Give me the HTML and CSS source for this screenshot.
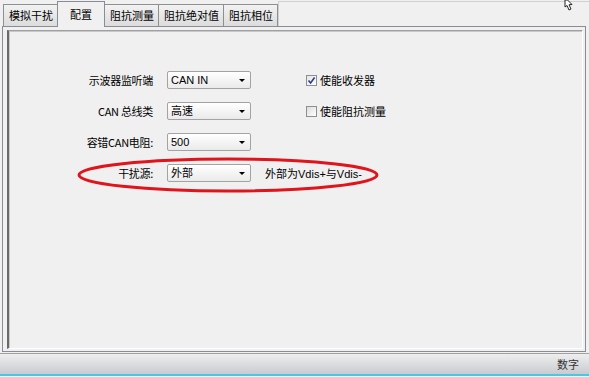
FILE: index.html
```html
<!DOCTYPE html>
<html lang="zh-CN">
  <head>
    <meta charset="UTF-8" />
    <meta name="viewport" content="width=device-width, initial-scale=1.0" />
    <title>配置</title>
    <link rel="stylesheet" href="styles.css">
  </head>
  <body>
    <div class="window">
      <div class="tabstrip">
        <div class="tab">模拟干扰</div>
        <div class="tab active">配置</div>
        <div class="tab">阻抗测量</div>
        <div class="tab">阻抗绝对值</div>
        <div class="tab">阻抗相位</div>
        <div class="strip-rest"></div>
      </div>
      <div class="tabpage">
        <div class="panel">
          <div class="form">
            <span class="label">示波器监听端</span>
            <div class="select">CAN IN<i class="arrow"></i></div>
            <label class="check"><span class="box checked">
              <svg width="9" height="9" viewBox="0 0 9 9"><path d="M1.5 4.5 L3.6 7 L7.6 1.5" fill="none" stroke="#2a3f8c" stroke-width="1.6"/></svg>
            </span>使能收发器</label>

            <span class="label">CAN 总线类</span>
            <div class="select">高速<i class="arrow"></i></div>
            <label class="check"><span class="box"></span>使能阻抗测量</label>

            <span class="label">容错CAN电阻:</span>
            <div class="select">500<i class="arrow"></i></div>
            <span></span>

            <span class="label">干扰源:</span>
            <div class="select">外部<i class="arrow"></i></div>
            <span class="note">外部为Vdis+与Vdis-</span>
          </div>
        </div>
      </div>
      <div class="statusbar"><span>数字</span></div>

      <svg class="ring" width="304" height="38" viewBox="0 0 304 38">
        <ellipse cx="152" cy="19" rx="149" ry="16" fill="none" stroke="#e0141c" stroke-width="3"/>
      </svg>
      <svg class="cursor" width="14" height="12" viewBox="0 0 14 12">
        <path d="M2 0 L2 7 L4 5.5 L6 10 L8 9 L6 4.8 L9 4.5 L4.5 0 Z" fill="#fff" stroke="#222" stroke-width="1"/>
      </svg>
    </div>
  </body>
</html>
```

FILE: styles.css
```css
body {
  margin: 0;
  background-color: #f0f0f0;
}

.window {
  position: relative;
  width: 589px;
  height: 377px;
  overflow: hidden;
  background-color: #f0f0f0;
  font-family: "Liberation Sans", "Noto Sans CJK SC", sans-serif;
  font-size: 11px;
  color: #000;
  display: flex;
  flex-direction: column;
}

.tabstrip {
  display: flex;
  align-items: flex-end;
  height: 26px;
  padding-left: 3px;
}

.tab {
  height: 22px;
  line-height: 21px;
  padding: 0 4px 0 5px;
  border: 1px solid #8e8f8f;
  border-bottom: none;
  background: linear-gradient(#f2f2f2, #dcdcdc);
  margin-right: -1px;
  font-family: "Noto Sans CJK SC", sans-serif;
  box-sizing: border-box;
}

.tab.active {
  height: 26px;
  line-height: 24px;
  padding: 0 12px;
  background: #f0f0f0;
  position: relative;
  z-index: 2;
  margin-bottom: -1px;
  border-color: #898c95;
}

.strip-rest {
  flex: 1;
  align-self: stretch;
  margin-top: 1px;
  margin-left: 1px;
  border: 1px solid #d0d0d0;
  border-bottom: none;
  border-right: none;
}

.tabpage {
  flex: 1;
  margin: 0 3px 0 2px;
  border: 1px solid #898c95;
  padding: 3px 2px 2px 4px;
  display: flex;
}

.panel {
  flex: 1;
  border-top: 1px solid #a0a0a0;
  border-left: 2px solid #696969;
  border-right: 1px solid #ffffff;
  border-bottom: 1px solid #ffffff;
  box-shadow: inset 1px 1px 0 #c8c8c8;
  padding-top: 40px;
}

.form {
  display: grid;
  grid-template-columns: 144px 84px auto;
  grid-auto-rows: 18px;
  column-gap: 14px;
  row-gap: 13px;
  align-items: center;
}

.label {
  text-align: right;
  font-family: "Noto Sans CJK SC", sans-serif;
  white-space: nowrap;
  letter-spacing: -0.3px;
}

.select {
  position: relative;
  height: 18px;
  box-sizing: border-box;
  border: 1px solid #a3a3a3;
  border-radius: 2px;
  background: linear-gradient(#ffffff, #eaeaea);
  line-height: 16px;
  padding-left: 3px;
  font-family: "Liberation Sans", "Noto Sans CJK SC", sans-serif;
}

.arrow {
  position: absolute;
  right: 5px;
  top: 7px;
  width: 0;
  height: 0;
  border-left: 3px solid transparent;
  border-right: 3px solid transparent;
  border-top: 3px solid #000;
}

.check {
  display: flex;
  align-items: center;
  gap: 3px;
  margin-left: 41px;
  font-family: "Noto Sans CJK SC", sans-serif;
}

.box {
  width: 11px;
  height: 11px;
  box-sizing: border-box;
  border: 1px solid #8f8f8f;
  background: linear-gradient(135deg, #dcdcdc, #ffffff);
  display: flex;
  align-items: center;
  justify-content: center;
}

.box.checked {
  background: linear-gradient(135deg, #e4e4e4, #ffffff);
}

.note {
  font-family: "Liberation Sans", "Noto Sans CJK SC", sans-serif;
  white-space: nowrap;
}

.statusbar {
  height: 20px;
  border-top: 1px solid #a0a0a0;
  border-bottom: 2px solid #4ec6de;
  background: linear-gradient(#eeeeee, #c9cbd0);
  display: flex;
  justify-content: flex-end;
  align-items: center;
  padding-right: 10px;
  margin-top: 1px;
  margin-bottom: 1px;
  font-family: "Noto Sans CJK SC", sans-serif;
  color: #333;
}

.ring {
  position: absolute;
  left: 76px;
  top: 156px;
}

.cursor {
  position: absolute;
  left: 563px;
  top: 0;
}
```
